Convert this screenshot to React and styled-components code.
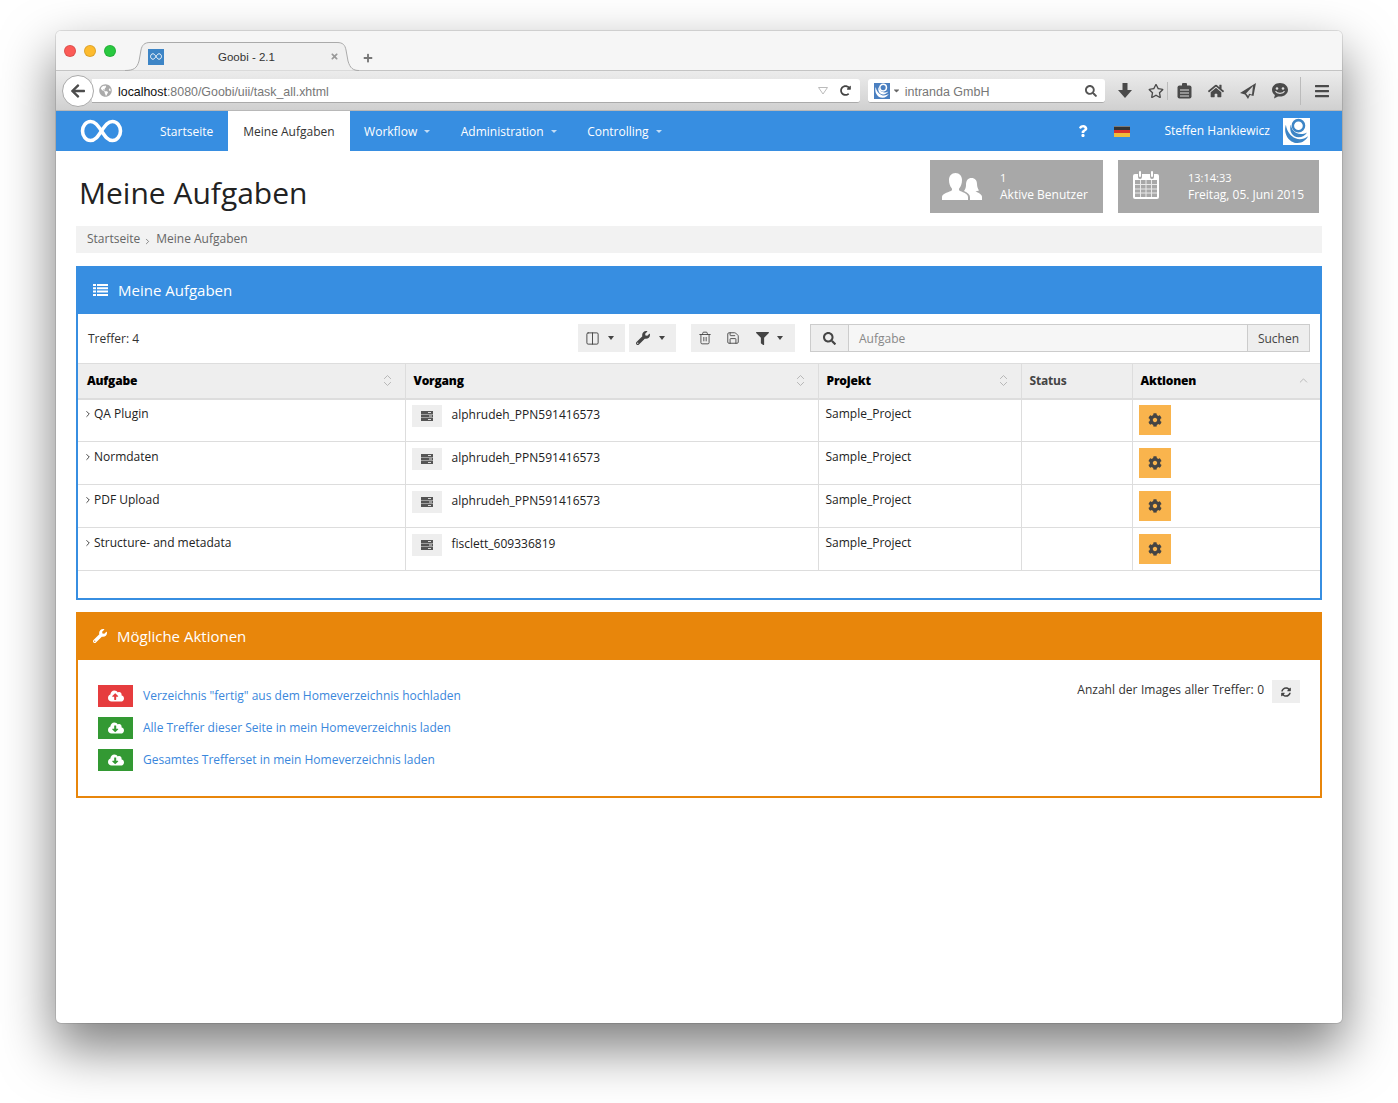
import React from 'react'
import styled, { createGlobalStyle } from 'styled-components'
import { ChevronRight, ChevronsUpDown, ChevronUp, Columns2, Trash2, Save } from 'lucide-react'
import {
  FaArrowLeft, FaRedoAlt, FaSearch, FaRegStar, FaHome, FaBars,
  FaQuestion, FaWrench, FaFilter, FaCog, FaCloudUploadAlt, FaCloudDownloadAlt, FaSyncAlt,
  FaGlobeAmericas, FaCaretDown, FaTimes, FaPlus,
} from 'react-icons/fa'

const BLUE = '#378ee1'
const ORANGE = '#e8860b'

const GlobalStyle = createGlobalStyle`
  html, body { margin: 0; background: #fff; }
  body { font-family: 'Open Sans', sans-serif; font-size: 12px; color: #333; }
  * { box-sizing: border-box; }
`

const Stage = styled.div`
  padding: 31px 56px 80px;
  height: 1103px;
  overflow: hidden;
`
const Window = styled.div`
  width: 1286px;
  height: 992px;
  background: #fff;
  border-radius: 5px;
  overflow: hidden;
  box-shadow: 0 24px 52px 2px rgba(0,0,0,.5), 0 0 0 1px rgba(0,0,0,.1);
`

/* browser chrome */
const TabStrip = styled.div`
  height: 40px;
  background: #f6f6f6;
  border-bottom: 1px solid #c4c4c4;
  display: flex;
  align-items: flex-end;
  padding-left: 8px;
`
const Lights = styled.div`
  display: flex;
  gap: 8px;
  align-self: flex-start;
  padding-top: 14px;
  width: 61px;
`
const Light = styled.span`
  width: 12px;
  height: 12px;
  border-radius: 50%;
  background: ${p => p.$c};
  border: 1px solid rgba(0,0,0,.12);
`
const Tab = styled.div`
  position: relative;
  width: 234px;
  height: 29px;
  margin-bottom: -1px;
  display: flex;
  align-items: center;
  font-family: 'Liberation Sans', sans-serif;
  font-size: 11.5px;
  color: #333;
  svg.shape { position: absolute; inset: 0; }
`
const Favicon = styled.span`
  position: relative;
  margin-left: 23px;
  width: 16px;
  height: 16px;
  background: #3d85c6;
  display: flex;
  align-items: center;
  justify-content: center;
`
const TabTitle = styled.span`
  position: relative;
  margin-left: 54px;
  width: 112px;
`
const TabClose = styled.span`
  position: relative;
  display: flex;
  color: #999;
  font-size: 9px;
`
const NewTab = styled.span`
  display: flex;
  align-self: center;
  margin: 14px 0 0 4px;
  color: #777;
  font-size: 10px;
`
const BrowserBar = styled.div`
  height: 40px;
  background: linear-gradient(#ececec, #d0d0d0);
  border-bottom: 1px solid #b8b8b8;
  display: flex;
  align-items: center;
  padding: 1px 0 0 6px;
`
const BackButton = styled.span`
  position: relative;
  z-index: 1;
  width: 32px;
  height: 32px;
  border-radius: 50%;
  background: #fff;
  border: 1px solid #aaa;
  display: flex;
  align-items: center;
  justify-content: center;
  color: #4d4d4d;
  font-size: 16px;
  flex: none;
`
const UrlField = styled.div`
  margin-left: -2px;
  width: 770px;
  height: 24px;
  background: #fff;
  border-bottom: 1px solid #aaa;
  border-radius: 0 3px 3px 0;
  display: flex;
  align-items: center;
  padding: 0 9px 0 7px;
  font-family: 'Liberation Sans', sans-serif;
  font-size: 12.4px;
  color: #777;
  svg { flex: none; }
`
const UrlText = styled.span`
  margin-left: 6px;
  margin-top: 2px;
  flex: 1;
  b { font-weight: 400; color: #111; }
`
const SearchField = styled.div`
  margin-left: 8px;
  width: 238px;
  height: 24px;
  background: #fff;
  border-bottom: 1px solid #aaa;
  border-radius: 3px;
  display: flex;
  align-items: center;
  padding: 0 8px 0 6px;
  font-family: 'Liberation Sans', sans-serif;
  font-size: 12.5px;
  color: #777;
  span { flex: 1; margin-left: 4px; margin-top: 2px; }
`
const Tools = styled.div`
  display: flex;
  align-items: center;
  color: #4a4a4a;
  height: 100%;
`
const Tool = styled.span`
  width: ${p => p.$w || 31}px;
  display: flex;
  justify-content: center;
  font-size: 16px;
`
const ToolSep = styled.span`
  width: 1px;
  height: ${p => p.$h || 18}px;
  background: #bbb;
`

/* app nav */
const Nav = styled.nav`
  height: 40px;
  background: ${BLUE};
  display: flex;
  align-items: stretch;
  color: #fff;
  padding-left: 24px;
`
const Brand = styled.span`
  width: 65px;
  display: flex;
  align-items: center;
`
const NavItem = styled.a`
  display: flex;
  align-items: center;
  gap: 6px;
  padding: 0 ${p => p.$first ? 15 : 16}px 0 ${p => p.$first ? 15 : 14.5}px;
  background: ${p => p.$active ? '#fff' : 'transparent'};
  color: ${p => p.$active ? '#333' : '#fff'};
  font-size: 12px;
`
const NavCaret = styled.i`
  width: 0;
  height: 0;
  border-left: 3px solid transparent;
  border-right: 3px solid transparent;
  border-top: 3px solid rgba(255,255,255,.7);
  margin-left: 1px;
`
const NavRight = styled.div`
  margin-left: auto;
  display: flex;
  align-items: center;
  padding-right: 32px;
  font-size: 12px;
`
const Help = styled.span`
  display: flex;
  font-size: 12px;
  margin-right: 25px;
`
const Flag = styled.span`
  width: 16px;
  height: 11px;
  margin-right: 34px;
  background: linear-gradient(#333 0 33%, #d8322a 33% 66%, #f0bc3a 66%);
  box-shadow: inset 0 1px 0 rgba(255,255,255,.35);
`
const UserName = styled.span`
  margin-right: 13px;
  margin-top: -1px;
`

/* page */
const Content = styled.main`
  padding: 0 20px;
`
const TitleRow = styled.div`
  height: 75px;
  display: flex;
  align-items: flex-start;
  padding-right: 3px;
`
const Title = styled.h1`
  margin: 22px 0 0 3px;
  font-size: 30px;
  line-height: 40px;
  font-weight: 400;
  color: #222;
  flex: 1;
`
const Stat = styled.div`
  margin: 9px 0 0 15px;
  height: 53px;
  width: ${p => p.$w}px;
  background: #a8a8a8;
  color: #fff;
  display: flex;
  align-items: center;
  padding-left: ${p => p.$pad}px;
`
const StatText = styled.div`
  margin-left: ${p => p.$gap}px;
  margin-top: -2px;
  font-size: 12px;
  line-height: 17px;
  small { display: block; font-size: 11px; }
`
const Crumbs = styled.div`
  height: 27px;
  background: #f2f2f2;
  display: flex;
  align-items: center;
  padding: 0 0 2px 11px;
  font-size: 12px;
  color: #666;
  margin-bottom: 13px;
  svg { margin: 6px 4px 0 3px; }
`
const Panel = styled.section`
  border: 2px solid ${p => p.$c};
  border-top: 0;
  margin-bottom: 12px;
  height: ${p => p.$h}px;
`
const PanelHead = styled.header`
  height: 48px;
  margin: 0 -2px;
  padding-left: ${p => p.$pad}px;
  background: ${p => p.$c};
  color: #fff;
  display: flex;
  align-items: center;
  font-size: 15px;
  gap: ${p => p.$gap}px;
`
const ListBar = styled.div`
  height: 49px;
  display: flex;
  align-items: flex-start;
  padding: 10px 10px 0;
  font-size: 12px;
`
const Hits = styled.span`
  flex: 1;
  line-height: 30px;
`
const BtnGroup = styled.div`
  height: 28px;
  width: ${p => p.$w}px;
  background: #eee;
  display: flex;
  align-items: center;
  color: #444;
  padding: 0 11px 0 7px;
  justify-content: ${p => p.$start ? 'flex-start' : 'space-between'};
  margin-right: ${p => p.$mr}px;
`
const GlyphSlot = styled.span`
  display: flex;
  margin-left: ${p => p.$ml || 0}px;
`
const Caret = styled.i`
  width: 0;
  height: 0;
  border-left: 3.5px solid transparent;
  border-right: 3.5px solid transparent;
  border-top: 4px solid #444;
`
const SearchGroup = styled.div`
  width: 500px;
  height: 28px;
  border: 1px solid #ccc;
  display: flex;
  align-items: stretch;
  background: #f6f6f6;
`
const Addon = styled.span`
  background: #eee;
  display: flex;
  align-items: center;
  justify-content: center;
  color: #444;
  flex: none;
  width: ${p => p.$w}px;
  border-${p => p.$side}: 1px solid #ccc;
`
const SearchInput = styled.span`
  flex: 1;
  display: flex;
  align-items: center;
  padding-left: 10px;
  color: #888;
`
const Table = styled.table`
  width: 1242px;
  table-layout: fixed;
  border-collapse: collapse;
  font-size: 12px;
  color: #222;
  border-top: 1px solid #ddd;
  tbody tr:first-child td { padding-top: 5px; }
`
const Th = styled.th`
  height: 35px;
  background: #eee;
  border-bottom: 2px solid #ddd;
  border-left: 1px solid #ddd;
  text-align: left;
  font-weight: 700;
  letter-spacing: -.2px;
  padding: 0 10px 0 8px;
  color: ${p => p.$muted ? '#444' : '#000'};
  &:first-child { border-left: 0; padding-left: 9px; }
`
const ThInner = styled.span`
  display: flex;
  align-items: center;
  justify-content: space-between;
  color: #aaa;
  b { color: #000; }
`
const Td = styled.td`
  height: 43px;
  vertical-align: top;
  border-bottom: 1px solid #ddd;
  border-left: 1px solid #ddd;
  padding: 6px 6px 0;
  &:first-child { border-left: 0; }
`
const TaskName = styled.span`
  display: flex;
  align-items: center;
  gap: 1px;
  margin-top: 1px;
  line-height: 16px;
  svg { flex: none; margin-left: -1px; }
`
const Process = styled.span`
  display: flex;
  align-items: flex-start;
  gap: 10px;
  line-height: 20px;
`
const ProcessIcon = styled.span`
  width: 30px;
  height: 22px;
  background: #eee;
  display: flex;
  align-items: center;
  justify-content: center;
`
const ProjectName = styled.span`
  display: block;
  margin: 1px 0 0 1px;
  line-height: 16px;
`
const GearButton = styled.span`
  width: 32px;
  height: 30px;
  background: #f9b44d;
  display: flex;
  align-items: center;
  justify-content: center;
  color: #444;
  font-size: 14px;
`
const ActionsBody = styled.div`
  display: flex;
  justify-content: space-between;
  align-items: flex-start;
  padding: 20px 20px 0;
`
const ActionList = styled.div`
  display: flex;
  flex-direction: column;
  gap: 10px;
  padding-top: 5px;
`
const ActionRow = styled.a`
  display: flex;
  align-items: center;
  gap: 10px;
  color: #3a87dc;
  font-size: 12px;
  line-height: 22px;
`
const ActionIcon = styled.span`
  width: 35px;
  height: 22px;
  background: ${p => p.$c};
  color: #fff;
  display: flex;
  align-items: center;
  justify-content: center;
  font-size: 16px;
`
const ImageCount = styled.div`
  display: flex;
  align-items: center;
  gap: 8px;
  font-size: 12px;
  color: #333;
  line-height: 18px;
`
const CountLabel = styled.span`
  margin-bottom: 4px;
  word-spacing: .4px;
`
const Refresh = styled.span`
  width: 28px;
  height: 23px;
  background: #eee;
  color: #444;
  font-size: 10px;
  display: flex;
  align-items: center;
  justify-content: center;
`

const Infinity8 = ({ w, h, sw }) => (
  <svg width={w} height={h} viewBox="0 0 42 24" fill="none" stroke="#fff" strokeWidth={sw}>
    <path d="M21 12C17 6 14.500 2.500 10 2.500C5.500 2.500 2 7 2 12C2 17 5.500 21.500 10 21.500C14.500 21.500 17 18 21 12C25 6 27.500 2.500 32 2.500C36.500 2.500 40 7 40 12C40 17 36.500 21.500 32 21.500C27.500 21.500 25 18 21 12Z" />
  </svg>
)

const IntrandaLogo = ({ size, bg, fg }) => (
  <svg width={size} height={size} viewBox="0 0 28 28" style={{ flex: 'none' }}>
    <rect width="28" height="28" fill={bg} />
    <path d="M3 7C0 16 6 26 15 26C20 26 24 23 26 19C22 22 17 23 13 21C8 19 4 14 3 7Z" fill={fg} />
    <path d="M8 7C6 14 10 20 16 20C20 20 23 18 25 15C21 17 17 17 14 15.500C10 13.500 9 10.500 8 7Z" fill={fg} />
    <circle cx="16" cy="8" r="5.800" fill="none" stroke={fg} strokeWidth="2.600" />
  </svg>
)

/* browser toolbar glyphs */
const DownloadGlyph = () => (
  <svg width="14" height="16" viewBox="0 0 14 16" fill="#4a4a4a"><path d="M4.500 0H9.500V7H14L7 15L0 7H4.500Z" /></svg>
)
const ClipboardGlyph = () => (
  <svg width="15" height="16" viewBox="0 0 15 16">
    <rect x=".5" y="2.500" width="14" height="13" rx="2" fill="#4a4a4a" />
    <rect x="5" y="0" width="5" height="4" rx="1" fill="#4a4a4a" />
    <path d="M3 7H12M3 10H12M3 13H12" stroke="#ddd" strokeWidth="1.200" />
  </svg>
)
const SendGlyph = () => (
  <svg width="16" height="16" viewBox="0 0 16 16">
    <path d="M16 0L0 10L5 11.500L8 16L10 12L13.500 13Z" fill="#4a4a4a" />
    <path d="M13 3L6 10.500L8.200 13L9 10.800L12 11.500Z" fill="#d8d8d8" />
  </svg>
)
const ChatGlyph = () => (
  <svg width="16" height="16" viewBox="0 0 16 16">
    <path d="M8 0C3.600 0 0 2.900 0 6.800C0 9 1.100 10.800 2.900 12L2 15.500L6 13.400C6.700 13.500 7.300 13.600 8 13.600C12.400 13.600 16 10.700 16 6.800C16 2.900 12.400 0 8 0Z" fill="#4a4a4a" />
    <circle cx="5" cy="5.500" r="1.300" fill="#ddd" />
    <circle cx="11" cy="5.500" r="1.300" fill="#ddd" />
    <path d="M3.500 8.200C5 11 11 11 12.500 8.200" fill="none" stroke="#ddd" strokeWidth="1.300" />
  </svg>
)

const ListGlyph = () => (
  <svg width="15" height="12" viewBox="0 0 15 12" fill="#fff">
    <path d="M0 0H3V2H0ZM4 0H15V2H4ZM0 3.300H3V5.300H0ZM4 3.300H15V5.300H4ZM0 6.600H3V8.600H0ZM4 6.600H15V8.600H4ZM0 10H3V12H0ZM4 10H15V12H4Z" />
  </svg>
)

const UsersIcon = () => (
  <svg width="40" height="27" viewBox="0 0 40 27" fill="#fff" style={{ flex: 'none' }}>
    <path d="M0 27V24C0 21 5 19.500 9 18C10 17.500 10.500 16 9.500 15C8 13 7 10.500 7 7C7 3 9.500 0 13.500 0C17.500 0 20 3 20 7C20 10.500 19 13 17.500 15C16.500 16 17 17.500 18 18C22 19.500 26 21 26 24V27Z" />
    <path d="M28 27V24C28 21.500 25.500 19.500 22 18C23.500 16 24 14 24 12C24 7.500 26 5 29.500 5C33 5 35 7.500 35 11C35 14 36 16 37 17.500L33.500 18.500C36.500 19.500 40 21.500 40 24V27Z" />
  </svg>
)

const CalendarIcon = () => (
  <svg width="26" height="28" viewBox="0 0 26 28" style={{ flex: 'none', marginTop: -3 }}>
    <rect x="0" y="3" width="26" height="25" rx="2" fill="#fff" />
    <g fill="#a8a8a8">
      <rect x="2" y="9" width="22" height="17" />
      <rect x="5" y="1" width="4" height="7" rx="2" />
      <rect x="17" y="1" width="4" height="7" rx="2" />
    </g>
    <g fill="#fff">
      <rect x="6" y="0" width="2" height="6" rx="1" />
      <rect x="18" y="0" width="2" height="6" rx="1" />
    </g>
    <g stroke="#fff" strokeWidth="1" opacity=".75">
      <path d="M7.500 9V26M13 9V26M18.500 9V26M2 13.500H24M2 18H24M2 22H24" />
    </g>
  </svg>
)

const ProcessGlyph = () => (
  <svg width="12" height="10" viewBox="0 0 12 10" fill="#555">
    <rect width="12" height="3" />
    <rect y="3.500" width="12" height="3" />
    <rect y="7" width="12" height="3" />
    <rect x="7" y="1" width="3" height="1" fill="#ddd" />
    <rect x="8" y="4.500" width="3" height="1" fill="#ddd" />
    <rect x="7" y="8" width="3" height="1" fill="#ddd" />
  </svg>
)

const tasks = [
  { name: 'QA Plugin', process: 'alphrudeh_PPN591416573' },
  { name: 'Normdaten', process: 'alphrudeh_PPN591416573' },
  { name: 'PDF Upload', process: 'alphrudeh_PPN591416573' },
  { name: 'Structure- and metadata', process: 'fisclett_609336819' },
]

const actions = [
  { label: 'Verzeichnis "fertig" aus dem Homeverzeichnis hochladen', color: '#e63c3e', Icon: FaCloudUploadAlt },
  { label: 'Alle Treffer dieser Seite in mein Homeverzeichnis laden', color: '#339933', Icon: FaCloudDownloadAlt },
  { label: 'Gesamtes Trefferset in mein Homeverzeichnis laden', color: '#339933', Icon: FaCloudDownloadAlt },
]

const SortHead = ({ label, icon = <ChevronsUpDown size={15} strokeWidth={1.3} /> }) => (
  <ThInner><b>{label}</b>{icon}</ThInner>
)

export default function App() {
  return (
    <Stage>
      <GlobalStyle />
      <Window>
        <TabStrip>
          <Lights>
            <Light $c="#fc5b57" />
            <Light $c="#fdbb2e" />
            <Light $c="#29c940" />
          </Lights>
          <Tab>
            <svg className="shape" width="234" height="29" viewBox="0 0 234 29" fill="none">
              <path d="M0 28.500C9 28.500 12 26 14 19L16 8C17 3 19.500 .5 25 .5H212C218 .5 220 3 221 8L223 19C225 26 228 28.500 234 28.500" fill="#f0f0f0" stroke="#aaa" />
            </svg>
            <Favicon><Infinity8 w={12} h={7} sw={3.5} /></Favicon>
            <TabTitle>Goobi - 2.1</TabTitle>
            <TabClose><FaTimes /></TabClose>
          </Tab>
          <NewTab><FaPlus /></NewTab>
        </TabStrip>
        <BrowserBar>
          <BackButton><FaArrowLeft /></BackButton>
          <UrlField>
            <FaGlobeAmericas size={13} color="#aaa" />
            <UrlText><b>localhost</b>:8080/Goobi/uii/task_all.xhtml</UrlText>
            <svg width="10" height="8" viewBox="0 0 10 8" fill="none" stroke="#bbb"><path d="M.5 .5H9.500L5 7Z" /></svg>
            <FaRedoAlt size={11} color="#444" style={{ marginLeft: 12 }} />
          </UrlField>
          <SearchField>
            <IntrandaLogo size={16} bg="#4a7fc0" fg="#fff" />
            <FaCaretDown size={9} color="#666" style={{ marginLeft: 2 }} />
            <span>intranda GmbH</span>
            <FaSearch size={12} color="#555" />
          </SearchField>
          <Tools>
            <Tool $w={40}><DownloadGlyph /></Tool>
            <Tool $w={22}><FaRegStar /></Tool>
            <ToolSep />
            <Tool $w={33}><ClipboardGlyph /></Tool>
            <Tool $w={29}><FaHome /></Tool>
            <Tool $w={36}><SendGlyph /></Tool>
            <Tool $w={27}><ChatGlyph /></Tool>
            <Tool $w={7} />
            <ToolSep $h={28} />
            <Tool $w={41}><FaBars size={16} /></Tool>
          </Tools>
        </BrowserBar>
        <Nav>
          <Brand><Infinity8 w={43} h={24} sw={3.6} /></Brand>
          <NavItem $first>Startseite</NavItem>
          <NavItem $active $first>Meine Aufgaben</NavItem>
          <NavItem>Workflow <NavCaret /></NavItem>
          <NavItem>Administration <NavCaret /></NavItem>
          <NavItem>Controlling <NavCaret /></NavItem>
          <NavRight>
            <Help><FaQuestion /></Help>
            <Flag />
            <UserName>Steffen Hankiewicz</UserName>
            <IntrandaLogo size={27} bg="#fff" fg="#3d85c6" />
          </NavRight>
        </Nav>
        <Content>
          <TitleRow>
            <Title>Meine Aufgaben</Title>
            <Stat $w={173} $pad={12}>
              <UsersIcon />
              <StatText $gap={18}><small>1</small>Aktive Benutzer</StatText>
            </Stat>
            <Stat $w={201} $pad={15}>
              <CalendarIcon />
              <StatText $gap={29}><small>13:14:33</small>Freitag, 05. Juni 2015</StatText>
            </Stat>
          </TitleRow>
          <Crumbs>
            Startseite
            <ChevronRight size={9} strokeWidth={2} />
            Meine Aufgaben
          </Crumbs>
          <Panel $c={BLUE} $h={334}>
            <PanelHead $c={BLUE} $pad={17} $gap={10}>
              <ListGlyph />
              Meine Aufgaben
            </PanelHead>
            <ListBar>
              <Hits>Treffer: 4</Hits>
              <BtnGroup $w={47} $mr={4}>
                <Columns2 size={15} strokeWidth={1.5} />
                <Caret />
              </BtnGroup>
              <BtnGroup $w={47} $mr={15}>
                <FaWrench size={14} />
                <Caret />
              </BtnGroup>
              <BtnGroup $w={104} $mr={15} $start>
                <GlyphSlot><Trash2 size={14} strokeWidth={1.5} /></GlyphSlot>
                <GlyphSlot $ml={14}><Save size={14} strokeWidth={1.5} /></GlyphSlot>
                <GlyphSlot $ml={16}><FaFilter size={13} /></GlyphSlot>
                <GlyphSlot $ml={8}><Caret /></GlyphSlot>
              </BtnGroup>
              <SearchGroup>
                <Addon $w={38} $side="right"><FaSearch size={13} /></Addon>
                <SearchInput>Aufgabe</SearchInput>
                <Addon $w={62} $side="left">Suchen</Addon>
              </SearchGroup>
            </ListBar>
            <Table>
              <colgroup>
                <col width="327" />
                <col width="413" />
                <col width="203" />
                <col width="111" />
                <col width="188" />
              </colgroup>
              <thead>
                <tr>
                  <Th><SortHead label="Aufgabe" /></Th>
                  <Th><SortHead label="Vorgang" /></Th>
                  <Th><SortHead label="Projekt" /></Th>
                  <Th $muted>Status</Th>
                  <Th><SortHead label="Aktionen" icon={<ChevronUp size={13} strokeWidth={1.4} />} /></Th>
                </tr>
              </thead>
              <tbody>
                {tasks.map(t => (
                  <tr key={t.name}>
                    <Td>
                      <TaskName><ChevronRight size={10} strokeWidth={2} />{t.name}</TaskName>
                    </Td>
                    <Td>
                      <Process>
                        <ProcessIcon><ProcessGlyph /></ProcessIcon>
                        {t.process}
                      </Process>
                    </Td>
                    <Td><ProjectName>Sample_Project</ProjectName></Td>
                    <Td />
                    <Td><GearButton><FaCog /></GearButton></Td>
                  </tr>
                ))}
              </tbody>
            </Table>
          </Panel>
          <Panel $c={ORANGE} $h={186}>
            <PanelHead $c={ORANGE} $pad={17} $gap={10}>
              <FaWrench size={14} />
              Mögliche Aktionen
            </PanelHead>
            <ActionsBody>
              <ActionList>
                {actions.map(a => (
                  <ActionRow key={a.label}>
                    <ActionIcon $c={a.color}><a.Icon /></ActionIcon>
                    {a.label}
                  </ActionRow>
                ))}
              </ActionList>
              <ImageCount>
                <CountLabel>Anzahl der Images aller Treffer: 0</CountLabel>
                <Refresh><FaSyncAlt /></Refresh>
              </ImageCount>
            </ActionsBody>
          </Panel>
        </Content>
      </Window>
    </Stage>
  )
}
